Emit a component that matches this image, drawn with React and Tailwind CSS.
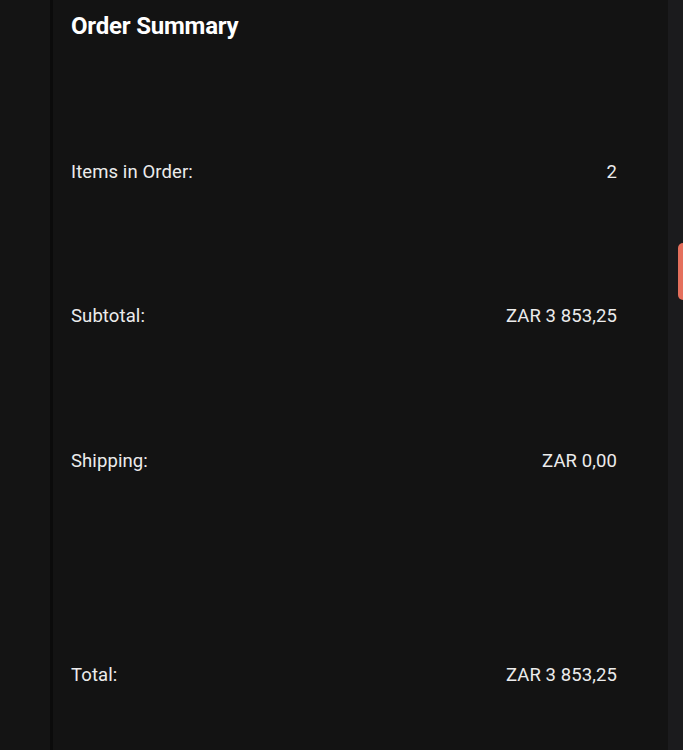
const rows = [
  { label: "Items in Order:", value: "2", gap: "mt-[118px]" },
  { label: "Subtotal:", value: "ZAR 3 853,25", gap: "mt-[120px]" },
  { label: "Shipping:", value: "ZAR 0,00", gap: "mt-[121px]" },
  { label: "Total:", value: "ZAR 3 853,25", gap: "mt-[190px]" },
];

const App = () => {
  return (
    <div className="flex h-[750px] w-full overflow-hidden bg-[#131313] font-['Roboto',sans-serif] text-[#ececec]">
      <div className="w-[50px] bg-[#141414]" />
      <div className="w-[3px] bg-[#0b0b0b]" />
      <div className="flex flex-1 flex-col pl-[18px] pr-[51px] pt-[10px]">
        <h2 className="text-[24px] font-bold leading-[32px] tracking-[-0.2px] text-white">
          Order Summary
        </h2>
        {rows.map((row) => (
          <div
            key={row.label}
            className={`${row.gap} flex items-center justify-between text-[18.5px] leading-[24px] tracking-[0.1px]`}>
            <span>{row.label}</span>
            <span>{row.value}</span>
          </div>
        ))}
      </div>
      <div className="flex w-[15px] flex-col bg-[#1b1b1d] pt-[243px]">
        <div className="ml-auto h-[57px] w-[5px] rounded-l-full bg-[#e46f5c]" />
      </div>
    </div>
  );
};

export default App;
